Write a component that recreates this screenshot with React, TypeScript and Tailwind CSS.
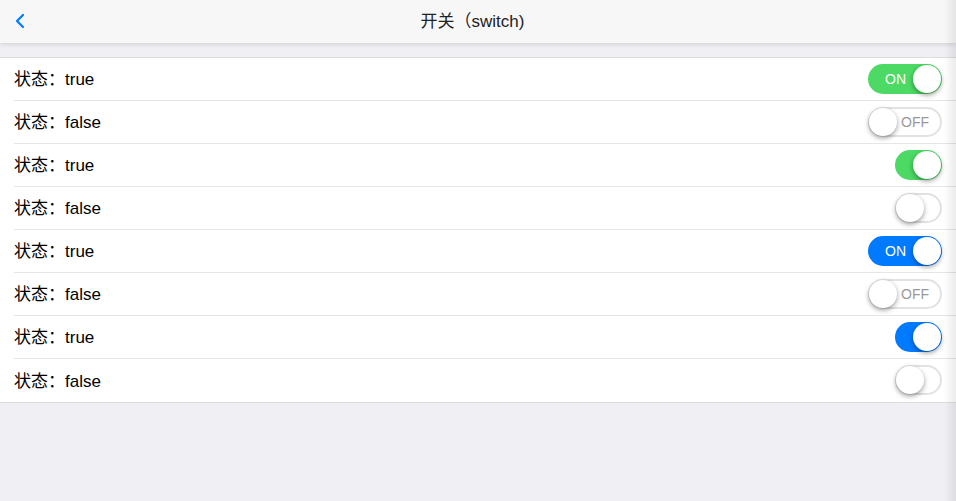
import React from "react";

type Row = { on: boolean; color: "green" | "blue"; label: boolean };

const rows: Row[] = [
  { on: true, color: "green", label: true },
  { on: false, color: "green", label: true },
  { on: true, color: "green", label: false },
  { on: false, color: "green", label: false },
  { on: true, color: "blue", label: true },
  { on: false, color: "blue", label: true },
  { on: true, color: "blue", label: false },
  { on: false, color: "blue", label: false },
];

function Switch({ on, color, label }: Row) {
  const width = label ? "w-[74px]" : "w-[47px]";
  const onBg =
    color === "green"
      ? "bg-[#4cd964] border-[#4cd964]"
      : "bg-[#007aff] border-[#007aff]";
  return (
    <div
      className={`relative self-start mt-[6px] ${width} h-[30px] rounded-full border-2 ${
        on ? onBg : "bg-white border-[#e2e2e2]"
      }`}
    >
      {label && (
        <span
          className={`absolute top-0 h-[26px] leading-[26px] text-[14px] ${
            on ? "left-[15px] text-white" : "right-[11px] text-[#999]"
          }`}
        >
          {on ? "ON" : "OFF"}
        </span>
      )}
      <div
        className={`absolute top-[-1px] w-[28px] h-[28px] rounded-full bg-white shadow-[0_2px_5px_rgba(0,0,0,0.4)] ${
          on ? "right-[-1px]" : "left-[-1px]"
        }`}
      />
    </div>
  );
}

export default function App() {
  return (
    <div
      className="relative w-full h-[501px] bg-[#efeff4] overflow-hidden"
      style={{ fontFamily: '"Liberation Sans", "Noto Sans CJK SC", Arial, sans-serif' }}
    >
      <header className="relative z-10 h-[43px] bg-[#f7f7f7] shadow-[0_0_6px_rgba(0,0,0,0.2)] flex items-center justify-center pr-[11px]">
        <svg
          className="absolute left-[14px] top-[13px]"
          width="12"
          height="16"
          viewBox="0 0 12 16"
          fill="none"
        >
          <path
            d="M9 2 L3 8 L9 14"
            stroke="#007aff"
            strokeWidth="2.2"
            strokeLinecap="round"
            strokeLinejoin="round"
          />
        </svg>
        <h1 className="text-[17px] text-[#222]">开关（switch)</h1>
      </header>
      <div className="mt-[14px] bg-white border-y border-[#dcdcdf]">
        {rows.map((r, i) => (
          <div key={i} className="pl-[14px]">
            <div
              className={`h-[43px] flex items-center justify-between pr-[14px] ${
                i < rows.length - 1 ? "border-b border-[#e5e5e5]" : ""
              }`}
            >
              <span className="text-[17px] text-black mt-[2px]">
                状态：{r.on ? "true" : "false"}
              </span>
              <Switch {...r} />
            </div>
          </div>
        ))}
      </div>
      <div className="absolute top-0 right-0 w-[12px] h-full bg-gradient-to-r from-transparent to-[rgba(0,0,0,0.08)] z-20" />
    </div>
  );
}
